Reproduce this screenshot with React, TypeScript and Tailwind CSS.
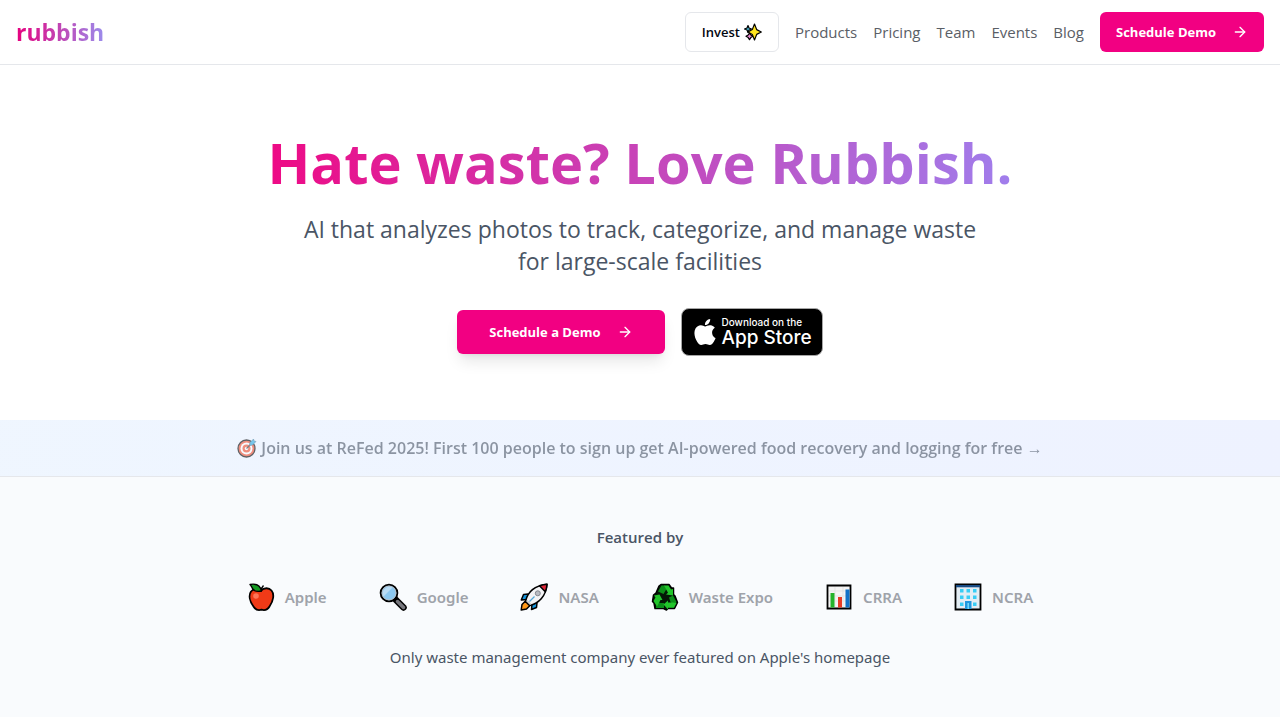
import type { ReactNode } from "react";
import { ArrowRight } from "lucide-react";
import { SiApple } from "react-icons/si";

function Sparkles() {
  return (
    <svg viewBox="0 0 18 18" className="h-[18px] w-[18px]" aria-hidden="true">
      <g stroke="#000" strokeWidth="1.2" strokeLinejoin="round">
        <path d="M4 2.500 5 5 7.500 6 5 7 4 9.500 3 7 .5 6 3 5Z" fill="#50c8e8" />
        <path d="M5.500 10 6.800 12 9 13.300 6.800 14.600 5.500 16.700 4.200 14.600 2 13.300 4.200 12Z" fill="#e88ad0" />
        <path d="M10.500 1 12.700 6.600 17.300 9 12.700 11.400 10.500 17 8.300 11.400 4 9 8.300 6.600Z" fill="#ffe51f" />
      </g>
    </svg>
  );
}

function Target() {
  return (
    <svg viewBox="0 0 20 20" className="h-5 w-5" aria-hidden="true">
      <circle cx="9.500" cy="10.500" r="8.500" fill="#f04a2a" stroke="#000" strokeWidth="1.300" />
      <circle cx="9.500" cy="10.500" r="6" fill="#fff" />
      <circle cx="9.500" cy="10.500" r="4" fill="#f04a2a" />
      <circle cx="9.500" cy="10.500" r="1.700" fill="#fff" />
      <path d="M9.500 10.500 15 5" stroke="#333" strokeWidth="1.300" />
      <path d="M12.500 7.500 13 4.500 16.500 1 17 3 19 3.500 15.500 7Z" fill="#28a8e0" stroke="#246080" strokeWidth=".6" />
    </svg>
  );
}

function AppleFruit() {
  return (
    <svg viewBox="0 0 28 28" className="h-7 w-7" aria-hidden="true">
      <path
        d="M14 7.500C17 4.500 22 4.500 24.500 7.500 27.500 11 26.500 18 22.500 23.500 20.500 27 17.500 27.500 14.500 26.700 11.500 27.500 8.500 27 6.500 23.500 2.500 18 1.500 12 4 8.500 6.500 5.500 10.500 5 14 7.500Z"
        fill="#f03a17"
        stroke="#000"
        strokeWidth="1.800"
      />
      <path d="M14 8.500C14.200 6 14.800 4 16.500 2.500" fill="none" stroke="#000" strokeWidth="1.500" />
      <path d="M3 1.500C7 .8 13 1 14.500 8 9.500 9 6 7.500 5 4.500 4.600 3.500 4 2.600 3 1.500Z" fill="#159a22" stroke="#000" strokeWidth="1.300" strokeLinejoin="round" />
      <circle cx="9" cy="13" r="2.800" fill="#ff7558" />
    </svg>
  );
}

function Magnifier() {
  return (
    <svg viewBox="0 0 28 28" className="h-7 w-7" aria-hidden="true">
      <path d="m16.500 16.500 8 8" stroke="#000" strokeWidth="6.500" strokeLinecap="round" />
      <path d="m18.500 18.500 6 6" stroke="#77777d" strokeWidth="3.500" strokeLinecap="round" />
      <circle cx="10" cy="10" r="8.300" fill="#8cc8f0" stroke="#000" strokeWidth="2" />
      <path d="M4.500 13.500A6.700 6.700 0 0 1 13.500 4.500Z" fill="#b9dcf5" />
      <circle cx="10" cy="10" r="7" fill="none" stroke="#b8c0c8" strokeWidth="1" />
    </svg>
  );
}

function Rocket() {
  return (
    <svg viewBox="0 0 28 28" className="h-7 w-7" aria-hidden="true">
      <g stroke="#000" strokeWidth="1.500" strokeLinejoin="round">
        <path d="M8 11 3.500 11.500 1.300 17 7 16.500ZM17 20 16.500 24.500 11.500 26.500 12 21Z" fill="#1795dc" />
        <path d="M5.500 18 2 21.500 1.200 27 6.500 26 10 22.500Z" fill="#ff9818" />
        <path d="M5.500 18.500C7.500 9 15 2.500 27 1.200 26 13 19 20.500 9.500 22.500Z" fill="#f3f3f5" />
        <path d="M19.500 2.700C22 1.800 24.500 1.300 27 1.200 26.900 4 26.200 6.500 25.300 8.800Z" fill="#df2638" />
      </g>
      <path d="m7 17.500 4 4" stroke="#c9cbd0" strokeWidth="1.500" />
      <circle cx="17.800" cy="10.300" r="2.500" fill="#b9bcc3" stroke="#85888f" />
      <path d="m9.500 18.500 5-5" stroke="#55a9d8" strokeWidth="1.300" />
    </svg>
  );
}

function Recycle() {
  return (
    <svg viewBox="0 0 28 28" className="h-7 w-7" aria-hidden="true">
      <path
        d="M10 1.500H18L20.500 5H22.500V11.500L24 13 26.500 19.500 23.500 25.500H17L15.500 27 12.500 25.500H4L3 20 1.500 18.500 2.500 12 5 10 8 3Z"
        fill="#041806"
        stroke="#000"
        strokeWidth="1.500"
        strokeLinejoin="round"
      />
      <path d="M10.500 2.500H13.500L15.500 6 12.500 11 7 8.500ZM5.500 17 9 20H13V25H5ZM22 12.500 25.500 19 23.500 22.500 19.500 19 18 14.500Z" fill="#0b8f18" />
      <path d="M13 2.500H17.500L20 6.500 22 6V12.500L15 11.500 17 9.800Z" fill="#22c52b" />
      <path d="M3 12.500 8.500 11.500 11.500 17 9.500 17 6 23.500 2.500 18 4.500 14.500Z" fill="#22c52b" />
      <path d="M25.500 20 23 24.700H17V26.500L12.500 21.500 17 17.500V19.500H22Z" fill="#22c52b" />
    </svg>
  );
}

function BarChart() {
  return (
    <svg viewBox="0 0 28 28" className="h-7 w-7" aria-hidden="true">
      <path d="M2.500 2.500H25.500V25.500H2.500Z" fill="#f4f4f4" stroke="#000" strokeWidth="1.800" />
      <path d="M4 8H24M4 13H24M4 18H24M10 4V24M18 4V24" stroke="#dedee0" strokeWidth=".7" />
      <path d="M5.500 10H9.500V24.500H5.500Z" fill="#24b32a" />
      <path d="M13 14H17V24.500H13Z" fill="#e73b25" />
      <path d="M20.500 6.500H24.500V24.500H20.500Z" fill="#1272c8" />
    </svg>
  );
}

function Building() {
  return (
    <svg viewBox="0 0 28 28" className="h-7 w-7" aria-hidden="true">
      <path d="M1.500 1.500H26.500V26.500H1.500Z" fill="#e3edf4" stroke="#000" strokeWidth="1.800" />
      <path d="M2 2H26V4.300H2Z" fill="#184c86" />
      <path
        d="M6 6h3.500v3.500H6ZM12.500 6H16v3.500h-3.500ZM19 6h3.500v3.500H19ZM6 12.500h3.500V16H6ZM12.500 12.500H16V16h-3.500ZM19 12.500h3.500V16H19ZM6 19.500h3.500V23H6ZM19 19.500h3.500V23H19Z"
        fill="#38cdf5"
      />
      <path d="M11 18H17.500V26H11Z" fill="#2098df" />
      <path d="M14.200 20V26" stroke="#75dcfa" strokeWidth="1.500" />
    </svg>
  );
}

const links = ["Products", "Pricing", "Team", "Events", "Blog"];

const featured: { name: string; icon: ReactNode }[] = [
  { name: "Apple", icon: <AppleFruit /> },
  { name: "Google", icon: <Magnifier /> },
  { name: "NASA", icon: <Rocket /> },
  { name: "Waste Expo", icon: <Recycle /> },
  { name: "CRRA", icon: <BarChart /> },
  { name: "NCRA", icon: <Building /> },
];

export default function App() {
  return (
    <div className="bg-white font-['Open_Sans','Noto_Sans',sans-serif] text-[15px] leading-6 text-gray-600">
      <header className="flex items-center justify-between border-b border-gray-200 px-4 py-3">
        <a
          href="#home"
          className="bg-linear-to-r/srgb from-[#e6007e] to-[#9b8cec] bg-clip-text text-[23px] leading-8 font-bold text-transparent"
        >
          rubbish
        </a>
        <nav className="flex items-center gap-4 text-[#5a5e66]">
          <button
            type="button"
            className="flex h-10 items-center gap-1 rounded-md border border-gray-200 px-4 text-[13px] font-semibold text-gray-950"
          >
            Invest
            <Sparkles />
          </button>
          {links.map((link) => (
            <a key={link} href={`#${link.toLowerCase()}`}>
              {link}
            </a>
          ))}
          <button
            type="button"
            className="flex h-10 items-center gap-4 rounded-md bg-[#f20082] px-4 text-[13px] font-bold text-white"
          >
            Schedule Demo
            <ArrowRight className="h-4 w-4" />
          </button>
        </nav>
      </header>

      <main>
        <section className="flex flex-col items-center px-4 py-16 text-center">
          <h1 className="bg-linear-to-r/srgb from-[#ee0a85] to-[#a07eec] bg-clip-text text-[56px] leading-[66px] font-bold text-transparent">
            Hate waste? Love Rubbish.
          </h1>
          <p className="mt-[18px] max-w-[700px] text-[23px] leading-8">
            AI that analyzes photos to track, categorize, and manage waste for large-scale facilities
          </p>
          <div className="mt-[31px] flex items-center gap-4">
            <button
              type="button"
              className="flex h-11 items-center gap-4 rounded-md bg-[#f20082] px-8 text-[13px] font-bold text-white shadow-lg"
            >
              Schedule a Demo
              <ArrowRight className="h-4 w-4" />
            </button>
            <a
              href="#app-store"
              className="flex h-12 items-center gap-1 rounded-lg border border-[#a6a6a6] bg-black px-[10px] font-['Inter',sans-serif] text-white"
            >
              <SiApple className="h-[26px] w-[26px]" />
              <span className="flex flex-col text-left">
                <span className="text-[10px] leading-3 font-medium">Download on the</span>
                <span className="text-[19px] leading-5 font-medium">App Store</span>
              </span>
            </a>
          </div>
        </section>

        <section className="border-b border-gray-200 bg-linear-to-r from-blue-50 to-indigo-50 px-4 py-4">
          <a
            href="#refed"
            className="flex items-center justify-center gap-1 text-base font-semibold opacity-60"
          >
            <Target />
            Join us at ReFed 2025! First 100 people to sign up get AI-powered food recovery and logging for free →
          </a>
        </section>

        <section className="bg-[#f9fbfd] px-4 py-12 text-center">
          <h2 className="font-semibold">Featured by</h2>
          <ul className="mt-8 flex flex-wrap items-center justify-center gap-x-[52px] gap-y-4 font-['Noto_Sans',sans-serif]">
            {featured.map((item) => (
              <li key={item.name} className="flex h-8 items-center gap-[10px] font-semibold text-[#9fa3aa]">
                {item.icon}
                {item.name}
              </li>
            ))}
          </ul>
          <p className="mt-8 font-['Noto_Sans',sans-serif]">
            Only waste management company ever featured on Apple&apos;s homepage
          </p>
        </section>
      </main>
    </div>
  );
}
